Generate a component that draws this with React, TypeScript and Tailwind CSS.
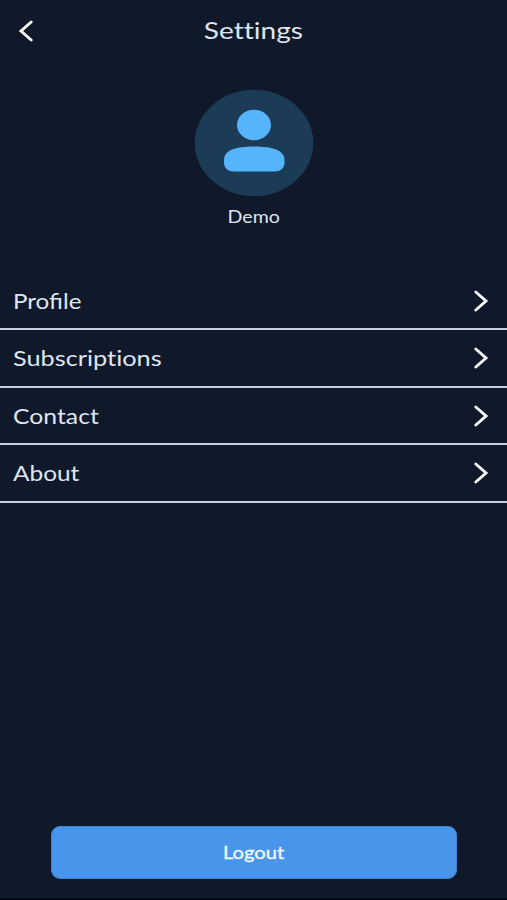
import React from 'react';

const menuItems = [
    { label: 'Profile', stretch: 'scale-x-[1.1]' },
    { label: 'Subscriptions', stretch: 'scale-x-[1.15] [font-variant-ligatures:none]' },
    { label: 'Contact', stretch: 'scale-x-[1.125]' },
    { label: 'About', stretch: 'scale-x-[1.11]' },
];

const Chevron = ({ left = false }: { left?: boolean }) => (
    <svg width="16" height="24" viewBox="0 0 16 24" fill="none" className={left ? 'rotate-180' : ''}>
        <path d="M2.8 3 L13 12 L2.8 21" stroke="#fafcff" strokeWidth="2.9" strokeLinecap="round" />
    </svg>
);

const Avatar = () => (
    <svg width="120" height="108" viewBox="0 0 120 108">
        <ellipse cx="60" cy="54" rx="59.3" ry="53.2" fill="#1c3b56" />
        <ellipse cx="60" cy="36" rx="17" ry="15.2" fill="#56b4fa" />
        <path
            d="M30 71 C30 61 42 57.5 60 57.5 C78 57.5 90.5 61 90.5 71 V74 C90.5 79 86 82.5 81 82.5 H39.5 C34.5 82.5 30 79 30 74 Z"
            fill="#56b4fa"
        />
    </svg>
);

const App = () => {
    return (
        <div className="flex h-[900px] w-full flex-col border-b-2 border-[#050816] bg-[#10192a] font-['Lato',sans-serif] text-[#dfe5f2]">
            {/* Header */}
            <header className="grid h-[62px] shrink-0 grid-cols-[60px_1fr_60px] items-center border-b border-[#0d1725]">
                <button className="pl-[18px]" aria-label="Back">
                    <Chevron left />
                </button>
                <h1 className="pb-[2px] text-center text-[24px] leading-[30px]">
                    <span className="inline-block scale-x-[1.17] [font-variant-ligatures:none]">Settings</span>
                </h1>
            </header>

            {/* User */}
            <section className="flex h-[210.5px] shrink-0 flex-col items-center pt-[27px]">
                <Avatar />
                <p className="mt-[8px] text-[17px] leading-[24px]">
                    <span className="inline-block scale-x-[1.15]">Demo</span>
                </p>
            </section>

            {/* Menu */}
            <nav>
                {menuItems.map((item) => (
                    <a
                        key={item.label}
                        className="flex h-[57.5px] items-center justify-between border-b-2 border-[#c8d0df] pt-px pr-[18px] pl-[12.5px] text-[22px] leading-[28px]"
                    >
                        <span className={`inline-block origin-left ${item.stretch}`}>{item.label}</span>
                        <Chevron />
                    </a>
                ))}
            </nav>

            <button className="mx-auto mt-auto mb-[19px] h-[53.5px] w-[406px] rounded-[9px] border border-[#3f83d3] bg-[#4995eb] pt-[2px] text-[17.5px] text-[#f1f9ff] [-webkit-text-stroke:0.3px_#f1f9ff]">
                <span className="inline-block scale-x-[1.15]">Logout</span>
            </button>
        </div>
    );
};

export default App;
